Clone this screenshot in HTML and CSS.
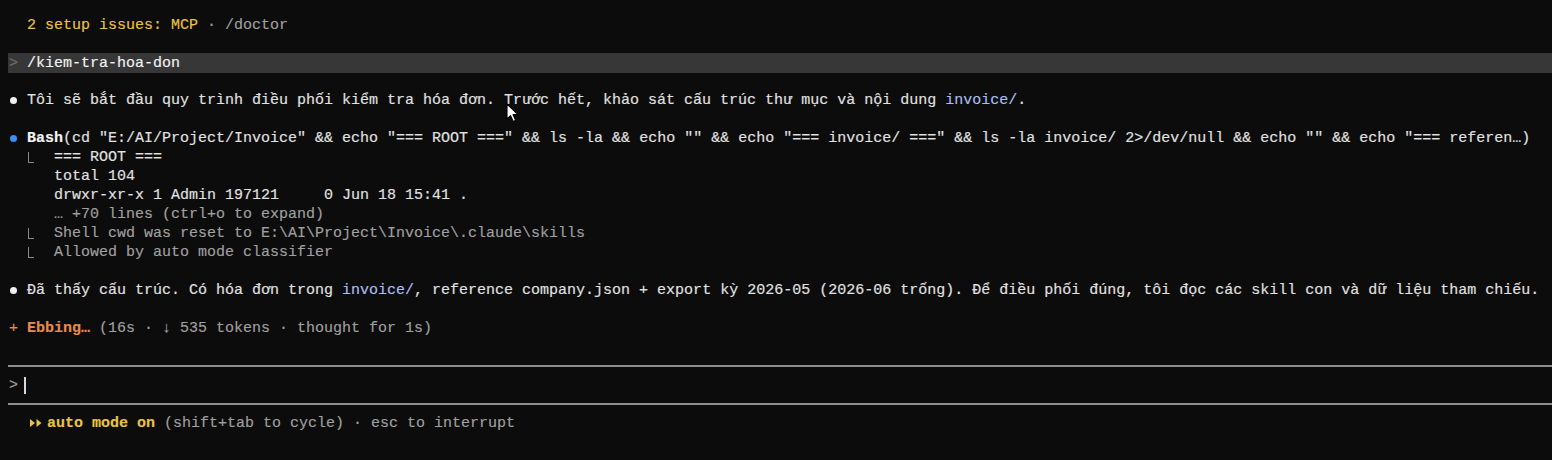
FILE: index.html
```html
<!DOCTYPE html>
<html lang="vi">
<head>
<meta charset="utf-8">
<title>Terminal</title>
<link rel="stylesheet" href="styles.css">
</head>
<body>
<div class="term">
  <div class="row">  <span class="yellow">2 setup issues: MCP</span><span class="dim"> · /doctor</span></div>
  <div class="row"></div>
  <div class="row band"><span class="dimmer">&gt;</span> <span class="bright">/kiem-tra-hoa-don</span></div>
  <div class="row"></div>
  <div class="row"><span class="dot white-dot"></span> Tôi sẽ bắt đầu quy trình điều phối kiểm tra hóa đơn. Trước hết, khảo sát cấu trúc thư mục và nội dung <span class="link">invoice/</span>.</div>
  <div class="row"></div>
  <div class="row"><span class="dot blue-dot"></span> <b class="bright">Bash</b>(cd "E:/AI/Project/Invoice" &amp;&amp; echo "=== ROOT ===" &amp;&amp; ls -la &amp;&amp; echo "" &amp;&amp; echo "=== invoice/ ===" &amp;&amp; ls -la invoice/ 2&gt;/dev/null &amp;&amp; echo "" &amp;&amp; echo "=== referen…)</div>
  <div class="row">  <span class="tree"></span>  === ROOT ===</div>
  <div class="row">     total 104</div>
  <div class="row">     drwxr-xr-x 1 Admin 197121     0 Jun 18 15:41 .</div>
  <div class="row dim">     … +70 lines (ctrl+o to expand)</div>
  <div class="row dim">  <span class="tree"></span>  Shell cwd was reset to E:\AI\Project\Invoice\.claude\skills</div>
  <div class="row dim">  <span class="tree"></span>  Allowed by auto mode classifier</div>
  <div class="row"></div>
  <div class="row"><span class="dot white-dot"></span> Đã thấy cấu trúc. Có hóa đơn trong <span class="link">invoice/</span>, reference company.json + export kỳ 2026-05 (2026-06 trống). Để điều phối đúng, tôi đọc các skill con và dữ liệu tham chiếu.</div>
  <div class="row"></div>
  <div class="row"><span class="orange">+</span> <b class="orange">Ebbing…</b><span class="dim"> (16s · ↓ 535 tokens · thought for 1s)</span></div>
  <div class="row"></div>
  <div class="row sep"></div>
  <div class="row input"><span class="dim">&gt;</span><span class="caret"></span></div>
  <div class="row sep"></div>
  <div class="row">  <span class="arrows"><svg width="14" height="10" viewBox="0 0 14 10"><path d="M1 1 L6 5 L1 9 Z" fill="#e9c341"/><path d="M7.5 1 L12.5 5 L7.5 9 Z" fill="#e9c341"/></svg></span><b class="yellow mode">auto mode on</b><span class="dim"> (shift+tab to cycle) · esc to interrupt</span></div>
  <svg class="pointer" width="14" height="20" viewBox="0 0 14 20"><path d="M1 1 L1 16 L4.6 12.6 L7.2 18.4 L9.6 17.3 L7 11.6 L12 11.6 Z" fill="#ffffff" stroke="#000000" stroke-width="1.1" stroke-linejoin="round"/></svg>
</div>
</body>
</html>
```

FILE: styles.css
```css
html, body {
  margin: 0;
  padding: 0;
  background: #0c0c0c;
}

.term {
  position: relative;
  width: 1552px;
  height: 460px;
  box-sizing: border-box;
  padding: 16px 0 0 8px;
  overflow: hidden;
  font-family: "Liberation Mono", "DejaVu Sans Mono", monospace;
  font-size: 15px;
  color: #e2e2e2;
  -webkit-text-stroke: 0.15px currentColor;
}

.row {
  height: 19px;
  line-height: 19px;
  padding-left: 1px;
  white-space: pre;
}

.band {
  background: #373737;
  margin-top: -1px;
  height: 20px;
  line-height: 21px;
  margin-bottom: -1px;
}

.bright { color: #f4f4f4; }
.dim { color: #a0a0a0; }
.dimmer { color: #6e6e6e; }
.yellow { color: #e9c341; }
.orange { color: #e8884c; }
.link { color: #a9bff2; }

b { font-weight: bold; }

.dot {
  display: inline-block;
  width: 9px;
  height: 19px;
  vertical-align: top;
  position: relative;
}
.dot::before {
  content: "";
  position: absolute;
  left: 1px;
  top: 6px;
  width: 7px;
  height: 7px;
  border-radius: 50%;
}
.white-dot::before { background: #f0f0f0; }
.blue-dot::before { background: #3b8ff0; }

.tree {
  display: inline-block;
  width: 9px;
  height: 19px;
  vertical-align: top;
  position: relative;
}
.tree::before {
  content: "";
  position: absolute;
  left: 1px;
  top: 4px;
  width: 5px;
  height: 10px;
  border-left: 1px solid #8a8a8a;
  border-bottom: 1px solid #8a8a8a;
}

.sep {
  position: relative;
}
.sep::after {
  content: "";
  position: absolute;
  left: 0;
  right: 0;
  top: 8px;
  height: 2px;
  background: #8e8e8e;
}

.input .caret {
  display: inline-block;
  width: 2px;
  height: 17px;
  margin-left: 6px;
  vertical-align: top;
  margin-top: 1px;
  background: #d8d8d8;
}

.arrows {
  display: inline-block;
  width: 20px;
  height: 19px;
  vertical-align: top;
}
.arrows svg {
  display: block;
  margin-top: 4px;
  margin-left: 2px;
}
.mode { font-weight: bold; }

.pointer {
  position: absolute;
  left: 506px;
  top: 103px;
}
```
